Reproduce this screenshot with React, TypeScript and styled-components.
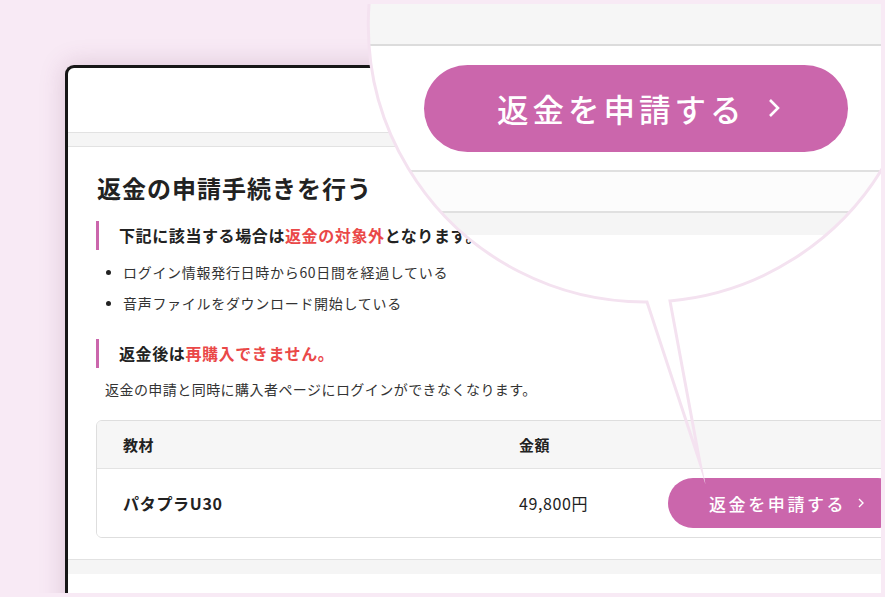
import React from "react";
import styled, { createGlobalStyle } from "styled-components";

const GlobalStyle = createGlobalStyle`
  *, *::before, *::after {
    box-sizing: border-box;
  }

  html,
  body {
    margin: 0;
    padding: 0;
  }

  body {
    background: #f8eaf5;
    font-family: "Noto Sans CJK JP", "Noto Sans", sans-serif;
    color: #222;
  }
`;

const PINK = "#cb66ac";
const RED = "#ea4848";

const Stage = styled.div`
  width: 885px;
  height: 597px;
  padding: 4px 4px 4px 0;
  background: #f8eaf5;
`;

const Viewport = styled.div`
  position: relative;
  width: 100%;
  height: 100%;
  overflow: hidden;
  padding: 61px 0 0 65px;
`;

const Window = styled.div`
  width: 900px;
  min-height: 600px;
  background: #fff;
  border-top: 3px solid #161616;
  border-left: 3px solid #161616;
  border-top-left-radius: 9px;
  box-shadow: 0 0 26px rgba(120, 58, 100, 0.22);
`;

const WindowHeader = styled.div`
  height: 65px;
  border-bottom: 1px solid #e2e2e2;
`;

const Band = styled.div<{ $top?: boolean }>`
  height: ${(p) => (p.$top ? "14px" : "15px")};
  background: #f5f5f5;
  border-top: ${(p) => (p.$top ? "none" : "1px solid #e2e2e2")};
  border-bottom: ${(p) => (p.$top ? "1px solid #e2e2e2" : "none")};
`;

const Content = styled.div`
  padding: 25px 30px 21px 28px;
`;

const Title = styled.h1`
  margin: 0 0 17px 1px;
  font-size: 24px;
  line-height: 32px;
  font-weight: 700;
  letter-spacing: 1px;
  color: #222;
`;

const Note = styled.p`
  margin: 0;
  border-left: 3px solid ${PINK};
  padding-left: 20px;
  font-size: 16px;
  line-height: 29px;
  font-weight: 700;
  letter-spacing: 0.6px;
`;

const Accent = styled.span`
  color: ${RED};
`;

const List = styled.ul`
  margin: 7px 0 20px;
  padding: 0 0 0 10px;
  list-style: none;
`;

const Item = styled.li`
  display: flex;
  align-items: center;
  gap: 12px;
  font-size: 14px;
  line-height: 31px;
  letter-spacing: 0.7px;
  color: #333;

  &::before {
    content: "";
    width: 5px;
    height: 5px;
    border-radius: 50%;
    background: #222;
  }
`;

const Text = styled.p`
  margin: 9px 0 0;
  padding-left: 9px;
  font-size: 14px;
  line-height: 24px;
  letter-spacing: 0.45px;
  color: #333;
`;

const Table = styled.div`
  margin-top: 19px;
  border: 1px solid #dedede;
  border-radius: 6px;
  overflow: hidden;
`;

const Row = styled.div<{ $head?: boolean }>`
  display: grid;
  grid-template-columns: 396px 149px 1fr;
  align-items: center;
  padding: 0 29px 0 26px;
  height: ${(p) => (p.$head ? "48px" : "68px")};
  background: ${(p) => (p.$head ? "#f6f6f6" : "#fff")};
  border-bottom: ${(p) => (p.$head ? "1px solid #e3e3e3" : "none")};
  font-size: ${(p) => (p.$head ? "15px" : "16px")};
  font-weight: ${(p) => (p.$head ? 700 : 400)};
  letter-spacing: 0.6px;
`;

const Name = styled.span`
  font-weight: 700;
  letter-spacing: 0.7px;
`;

const RefundButton = styled.button<{ $large?: boolean }>`
  display: flex;
  align-items: center;
  gap: ${(p) => (p.$large ? "22px" : "12px")};
  width: ${(p) => (p.$large ? "424px" : "235px")};
  height: ${(p) => (p.$large ? "87px" : "50px")};
  padding: 0 0 0 ${(p) => (p.$large ? "73px" : "41px")};
  border: none;
  border-radius: 999px;
  background: ${PINK};
  color: #fff;
  font-family: inherit;
  font-size: ${(p) => (p.$large ? "31.5px" : "17px")};
  font-weight: 500;
  letter-spacing: ${(p) => (p.$large ? "4px" : "2.6px")};
  cursor: pointer;

  svg {
    flex-shrink: 0;
  }
`;

const Chevron = ({ large }: { large?: boolean }) =>
  large ? (
    <svg width="12" height="20" viewBox="0 0 12 20">
      <polyline points="2,2 10,10 2,18" fill="none" stroke="#fff" strokeWidth="2.6" />
    </svg>
  ) : (
    <svg width="6" height="10" viewBox="0 0 6 10">
      <polyline points="1,1 5,5 1,9" fill="none" stroke="#fff" strokeWidth="1.4" />
    </svg>
  );

/* magnified view of the refund button */
const Lens = styled.div`
  position: absolute;
  left: 368px;
  top: -256px;
  width: 554px;
  height: 554px;
  border-radius: 50%;
  overflow: hidden;
  background: #fff;
  display: flex;
  flex-direction: column;
`;

const LensHead = styled.div`
  height: 298px;
  flex-shrink: 0;
  background: #f6f6f6;
  border-bottom: 2px solid #dcdcdc;
`;

const LensRow = styled.div`
  height: 126px;
  flex-shrink: 0;
  display: flex;
  align-items: center;
  padding-left: 56px;
  border-bottom: 2px solid #e0e0e0;
`;

const LensGap = styled.div`
  height: 41px;
  flex-shrink: 0;
  background: #fcfcfc;
  border-bottom: 2px solid #e0e0e0;
`;

const LensFoot = styled.div`
  height: 22px;
  flex-shrink: 0;
  background: #f5f5f5;
`;

const Outline = styled.svg`
  position: absolute;
  left: 0;
  top: 0;
  pointer-events: none;
`;

export default function App() {
  return (
    <>
      <GlobalStyle />
      <Stage>
        <Viewport>
          <Window>
            <WindowHeader />
            <Band $top />
            <Content>
              <Title>返金の申請手続きを行う</Title>
              <Note>
                下記に該当する場合は<Accent>返金の対象外</Accent>となります。
              </Note>
              <List>
                <Item>ログイン情報発行日時から60日間を経過している</Item>
                <Item>音声ファイルをダウンロード開始している</Item>
              </List>
              <Note>
                返金後は<Accent>再購入できません。</Accent>
              </Note>
              <Text>返金の申請と同時に購入者ページにログインができなくなります。</Text>
              <Table>
                <Row $head>
                  <span>教材</span>
                  <span>金額</span>
                  <span />
                </Row>
                <Row>
                  <Name>パタプラU30</Name>
                  <span>49,800円</span>
                  <RefundButton>
                    返金を申請する
                    <Chevron />
                  </RefundButton>
                </Row>
              </Table>
            </Content>
            <Band />
          </Window>

          <Lens>
            <LensHead />
            <LensRow>
              <RefundButton $large>
                返金を申請する
                <Chevron large />
              </RefundButton>
            </LensRow>
            <LensGap />
            <LensFoot />
          </Lens>

          <Outline width="881" height="589" viewBox="0 0 881 589">
            <path
              d="M 670 296.9 A 277 277 0 1 0 647 298 L 700 459 Z"
              fill="none"
              stroke="#f4e2f0"
              strokeWidth="3"
              strokeLinejoin="miter"
              strokeMiterlimit="20"
            />
          </Outline>
        </Viewport>
      </Stage>
    </>
  );
}
